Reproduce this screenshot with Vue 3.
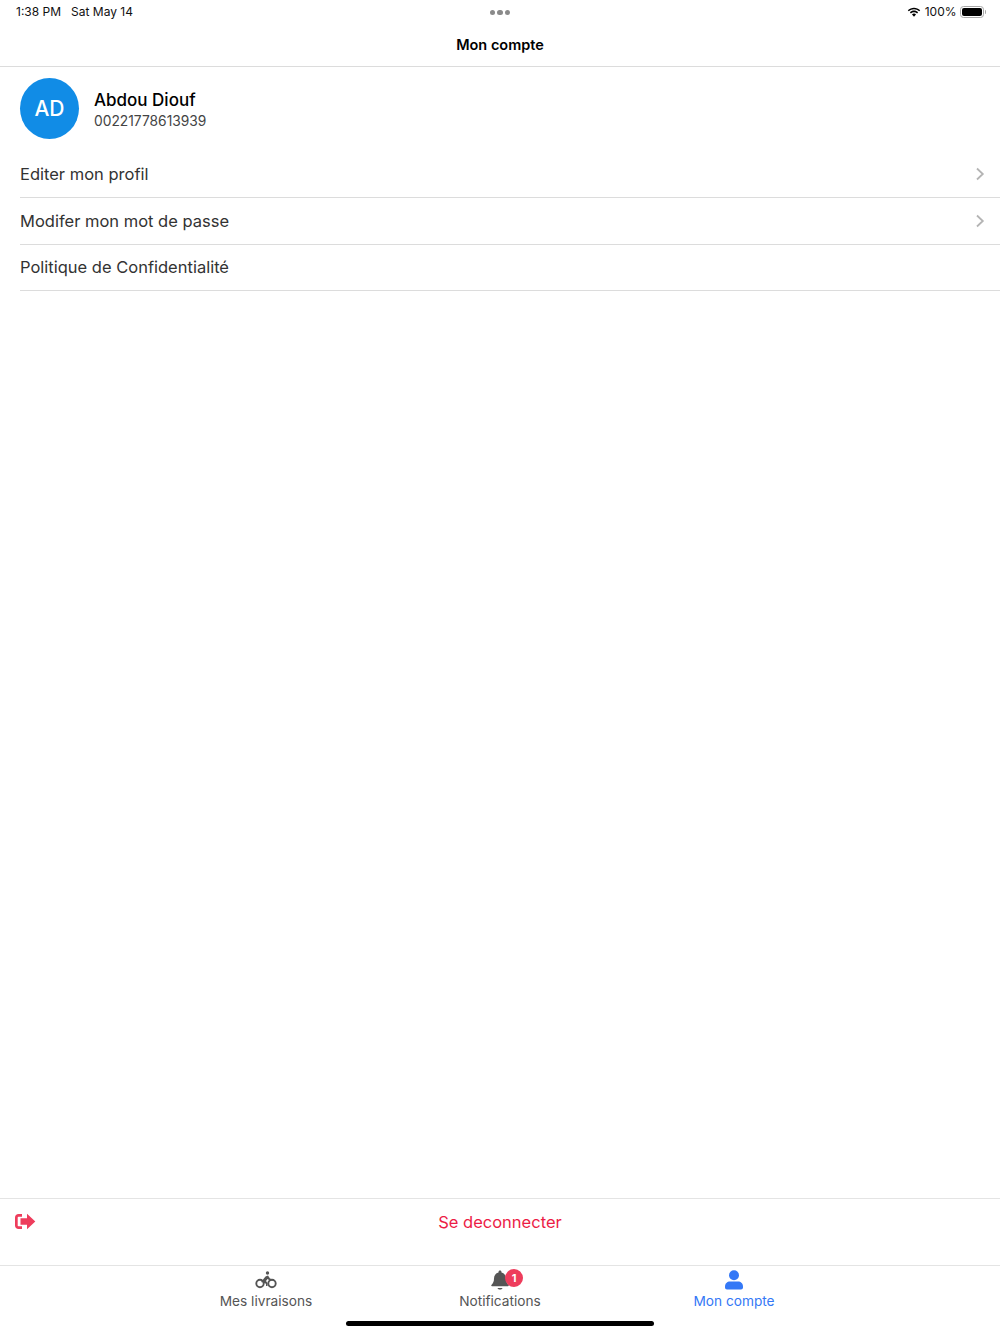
<template>
  <div class="screen">
    <div class="status-bar">
      <div class="status-left">
        <span>1:38 PM</span>
        <span>Sat May 14</span>
      </div>
      <div class="status-dots"><i></i><i></i><i></i></div>
      <div class="status-right">
        <svg width="14" height="11" viewBox="0 0 14 11">
          <path d="M7 2.200c2 0 3.800.8 5.200 2.100l1-1.100C11.500 1.600 9.300.7 7 .7S2.500 1.600.8 3.200l1 1.100C3.200 3 5 2.200 7 2.200z" fill="#000" />
          <path d="M7 5.200c1.200 0 2.300.4 3.100 1.200l1-1.100C9.900 4.200 8.500 3.600 7 3.600s-2.900.6-4.100 1.700l1 1.100C4.700 5.600 5.800 5.200 7 5.200z" fill="#000" />
          <path d="M7 6.600c-.8 0-1.500.3-2 .8l2 2.300 2-2.300c-.5-.5-1.200-.8-2-.8z" fill="#000" />
        </svg>
        <span>100%</span>
        <div class="battery"><div class="battery-fill"></div></div>
        <div class="battery-tip"></div>
      </div>
    </div>

    <header class="nav-header">Mon compte</header>

    <section class="profile">
      <div class="avatar">AD</div>
      <div class="profile-text">
        <div class="profile-name">Abdou Diouf</div>
        <div class="profile-phone">00221778613939</div>
      </div>
    </section>

    <ul class="menu">
      <li v-for="item in menuItems" :key="item.label" class="menu-row">
        <span>{{ item.label }}</span>
        <svg v-if="item.arrow" class="chevron" width="10" height="14" viewBox="0 0 10 14">
          <path d="M2 1.500 7.800 7 2 12.500" fill="none" stroke="#b4b4b4" stroke-width="1.800" />
        </svg>
      </li>
    </ul>

    <div class="spacer"></div>

    <div class="logout">
      <svg class="logout-icon" width="22" height="17" viewBox="0 0 22 17">
        <path d="M8 1H4.500C2.500 1 1 2.500 1 4.500v8C1 14.500 2.500 16 4.500 16H8v-2.800H4.500c-.6 0-.8-.3-.8-.8v-7.800c0-.6.3-.8.8-.8H8z" fill="#ee3d5c" />
        <path d="M13 .8 21.300 8.500 13 16.200v-4.500H6.500V5.300H13z" fill="#ee3d5c" />
      </svg>
      <span>Se deconnecter</span>
    </div>

    <nav class="tabs">
      <div class="tab">
        <svg width="22" height="18" viewBox="0 0 22 18">
          <circle cx="5" cy="12.500" r="3.700" fill="none" stroke="#555" stroke-width="1.900" />
          <circle cx="17" cy="12.500" r="3.700" fill="none" stroke="#555" stroke-width="1.900" />
          <circle cx="12.500" cy="2" r="1.700" fill="#555" />
          <path d="M6 11 10.500 5.500 13 4.500 15 7.500 18 8.500 17.500 9.800 14 9 12.500 8 11 10 12.500 12V15H11V12.800L8 11.500z" fill="#555" />
        </svg>
        <span>Mes livraisons</span>
      </div>
      <div class="tab">
        <div class="bell-wrap">
          <svg width="20" height="20" viewBox="0 0 20 20">
            <path d="M10 .5c.9 0 1.500.6 1.500 1.500v.5c2.900.7 4.500 3.200 4.500 6 0 3.300 1 4.700 2.600 6.500.4.500.1 1.200-.6 1.200H2c-.7 0-1-.7-.6-1.200C3 13.200 4 11.800 4 8.500c0-2.800 1.600-5.300 4.500-6V2c0-.9.6-1.500 1.500-1.500z" fill="#555" />
            <path d="M7.500 18h5c0 .8-1 1.500-2.500 1.500S7.500 18.800 7.500 18z" fill="#555" />
          </svg>
          <span class="badge">1</span>
        </div>
        <span>Notifications</span>
      </div>
      <div class="tab active">
        <svg width="20" height="20" viewBox="0 0 20 20">
          <circle cx="10" cy="5.300" r="5" fill="#3478f6" />
          <path d="M1 16.500c0-3 2.200-5 5-5h8c2.800 0 5 2 5 5v1c0 1.100-.9 2-2 2H3c-1.100 0-2-.9-2-2z" fill="#3478f6" />
        </svg>
        <span>Mon compte</span>
      </div>
      <div class="home-bar"></div>
    </nav>
  </div>
</template>

<script setup>
const menuItems = [
  { label: 'Editer mon profil', arrow: true },
  { label: 'Modifer mon mot de passe', arrow: true },
  { label: 'Politique de Confidentialité', arrow: false },
];
</script>

<style scoped>
.screen {
  width: 1000px;
  height: 1334px;
  display: flex;
  flex-direction: column;
  background: #fff;
  font-family: Inter, "Liberation Sans", sans-serif;
  color: #333;
  overflow: hidden;
}

.status-bar {
  height: 24px;
  padding: 0 14px 0 16px;
  display: flex;
  align-items: center;
  justify-content: space-between;
  font-size: 12px;
  color: #111;
  position: relative;
}

.status-left {
  display: flex;
  gap: 10px;
  margin-top: -2px;
}

.status-dots {
  position: absolute;
  left: 489.500px;
  top: 9.500px;
  display: flex;
  gap: 2px;
}

.status-dots i {
  width: 5.500px;
  height: 5.500px;
  border-radius: 50%;
  background: #8a8a8a;
}

.status-right {
  display: flex;
  align-items: center;
  gap: 4px;
}

.status-right span {
  margin-right: -1px;
  margin-top: -2px;
}

.battery {
  width: 24px;
  height: 12px;
  border: 1px solid #a8a8a8;
  border-radius: 3.500px;
  padding: 1px;
  box-sizing: border-box;
}

.battery-fill {
  height: 100%;
  border-radius: 2px;
  background: #000;
}

.battery-tip {
  width: 1.500px;
  height: 4px;
  margin-left: -3px;
  border-radius: 0 1px 1px 0;
  background: #a8a8a8;
}

.nav-header {
  height: 43px;
  padding-bottom: 2px;
  box-sizing: border-box;
  border-bottom: 1px solid #dcdcdc;
  display: flex;
  align-items: center;
  justify-content: center;
  font-size: 14.500px;
  font-weight: 600;
  color: #000;
}

.profile {
  height: 84.500px;
  padding-left: 20px;
  display: flex;
  align-items: center;
  gap: 15px;
}

.avatar {
  width: 59px;
  height: 61px;
  margin-bottom: 2.500px;
  padding-top: 1px;
  box-sizing: border-box;
  border-radius: 50%;
  background: #118ce6;
  color: #fff;
  font-size: 21px;
  font-weight: 500;
  display: flex;
  align-items: center;
  justify-content: center;
}

.profile-name {
  font-size: 17px;
  font-weight: 500;
  line-height: 24px;
  color: #000;
}

.profile-phone {
  font-size: 13.800px;
  line-height: 19px;
  color: #444;
}

.menu {
  list-style: none;
  margin: 0 0 0 20px;
  padding: 0;
}

.menu-row {
  height: 46.500px;
  box-sizing: border-box;
  border-bottom: 1px solid #dcdcdc;
  padding-right: 15px;
  display: flex;
  align-items: center;
  justify-content: space-between;
  font-size: 16.500px;
  color: #333;
}

.spacer {
  flex: 1;
}

.logout {
  height: 68px;
  box-sizing: border-box;
  border-top: 1px solid #e4e4e4;
  border-bottom: 1px solid #e4e4e4;
  padding-bottom: 20px;
  position: relative;
  display: flex;
  align-items: center;
  justify-content: center;
  font-size: 16.500px;
  color: #ec1c46;
}

.logout-icon {
  position: absolute;
  left: 14px;
  top: 14px;
}

.tabs {
  height: 68px;
  display: flex;
  justify-content: center;
  position: relative;
}

.tab {
  width: 234px;
  display: flex;
  flex-direction: column;
  align-items: center;
  padding-top: 4px;
  font-size: 13.700px;
  color: #555;
}

.tab svg {
  display: block;
}

.tab > svg,
.bell-wrap {
  height: 20px;
  margin-bottom: 2px;
}

.tab span {
  line-height: 18px;
}

.bell-wrap {
  position: relative;
  width: 20px;
}

.badge {
  position: absolute;
  left: 15px;
  top: -1px;
  width: 18px;
  height: 18px;
  border-radius: 50%;
  background: #ee3d5c;
  color: #fff;
  font-size: 11px;
  font-weight: 700;
  line-height: 18px !important;
  text-align: center;
}

.tab.active {
  color: #3478f6;
}

.home-bar {
  position: absolute;
  left: 346px;
  bottom: 8px;
  width: 308px;
  height: 5px;
  border-radius: 3px;
  background: #000;
}
</style>
